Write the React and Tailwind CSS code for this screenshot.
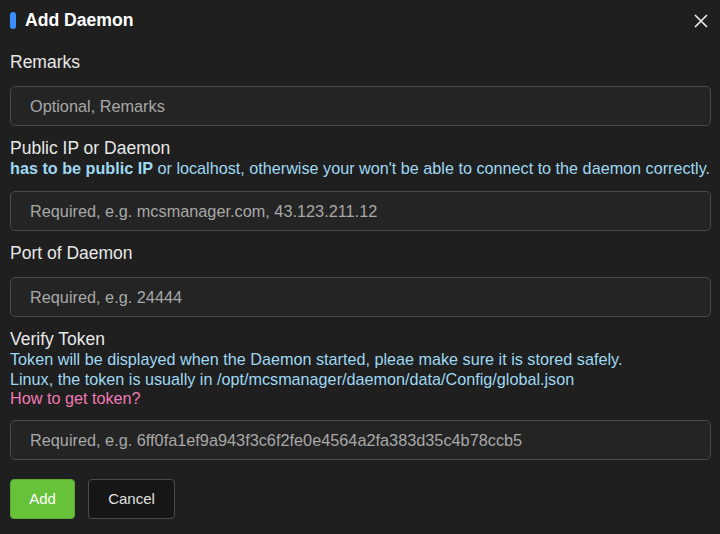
import React from 'react';

const Field = ({ placeholder }) => (
  <input
    placeholder={placeholder}
    className="w-full h-[40px] rounded-[5px] border border-[#4a4a4a] bg-[#242424] px-[19px] text-[16.3px] text-[#d0d0d0] placeholder:text-[#a8a8a8] outline-none"
  />
);

export default function App() {
  return (
    <div className="w-[720px] h-[534px] bg-[#1f1f1f] text-[#e8e8e8] font-['Liberation_Sans',Arial,sans-serif] pl-[10px] pr-[9px] overflow-hidden">
      {/* header */}
      <div className="flex items-center justify-between h-[41px]">
        <div className="flex items-center">
          <span className="w-[6px] h-[17px] rounded-[3px] bg-[#3b8eff] mr-[9px]" />
          <h1 className="text-[17.6px] font-bold text-white">Add Daemon</h1>
        </div>
        <button className="mr-[2px] text-[#f0f0f0]">
          <svg width="16" height="16" viewBox="0 0 16 16" stroke="currentColor" strokeWidth="1.6">
            <path d="M2 2 L14 14 M14 2 L2 14" />
          </svg>
        </button>
      </div>

      <div className="text-[17.5px] leading-[20px] mt-[11px]">Remarks</div>
      <div className="mt-[14px]"><Field placeholder="Optional, Remarks" /></div>

      <div className="text-[17.5px] leading-[20px] mt-[12px]">Public IP or Daemon</div>
      <div className="text-[16.2px] leading-[20px] text-[#9ed8f2] whitespace-nowrap">
        <b>has to be public IP</b> or localhost, otherwise your won't be able to connect to the daemon correctly.
      </div>
      <div className="mt-[13px]"><Field placeholder="Required, e.g. mcsmanager.com, 43.123.211.12" /></div>

      <div className="text-[17.5px] leading-[20px] mt-[12px]">Port of Daemon</div>
      <div className="mt-[14px]"><Field placeholder="Required, e.g. 24444" /></div>

      <div className="text-[17.5px] leading-[20px] mt-[12px]">Verify Token</div>
      <div className="text-[16.2px] leading-[20px] text-[#9ed8f2]">
        <div>Token will be displayed when the Daemon started, pleae make sure it is stored safely.</div>
        <div>Linux, the token is usually in /opt/mcsmanager/daemon/data/Config/global.json</div>
        <div className="text-[#ee7ab4] leading-[18px]">How to get token?</div>
      </div>
      <div className="mt-[13px]"><Field placeholder="Required, e.g. 6ff0fa1ef9a943f3c6f2fe0e4564a2fa383d35c4b78ccb5" /></div>

      <div className="flex gap-[13px] mt-[19px]">
        <button className="w-[65px] h-[40px] rounded-[4px] bg-[#67c23a] border border-[#5aaa33] text-white text-[15px]">Add</button>
        <button className="w-[87px] h-[40px] rounded-[4px] bg-[#161616] border border-[#4a4a4a] text-[#e0e0e0] text-[15px]">Cancel</button>
      </div>
    </div>
  );
}
